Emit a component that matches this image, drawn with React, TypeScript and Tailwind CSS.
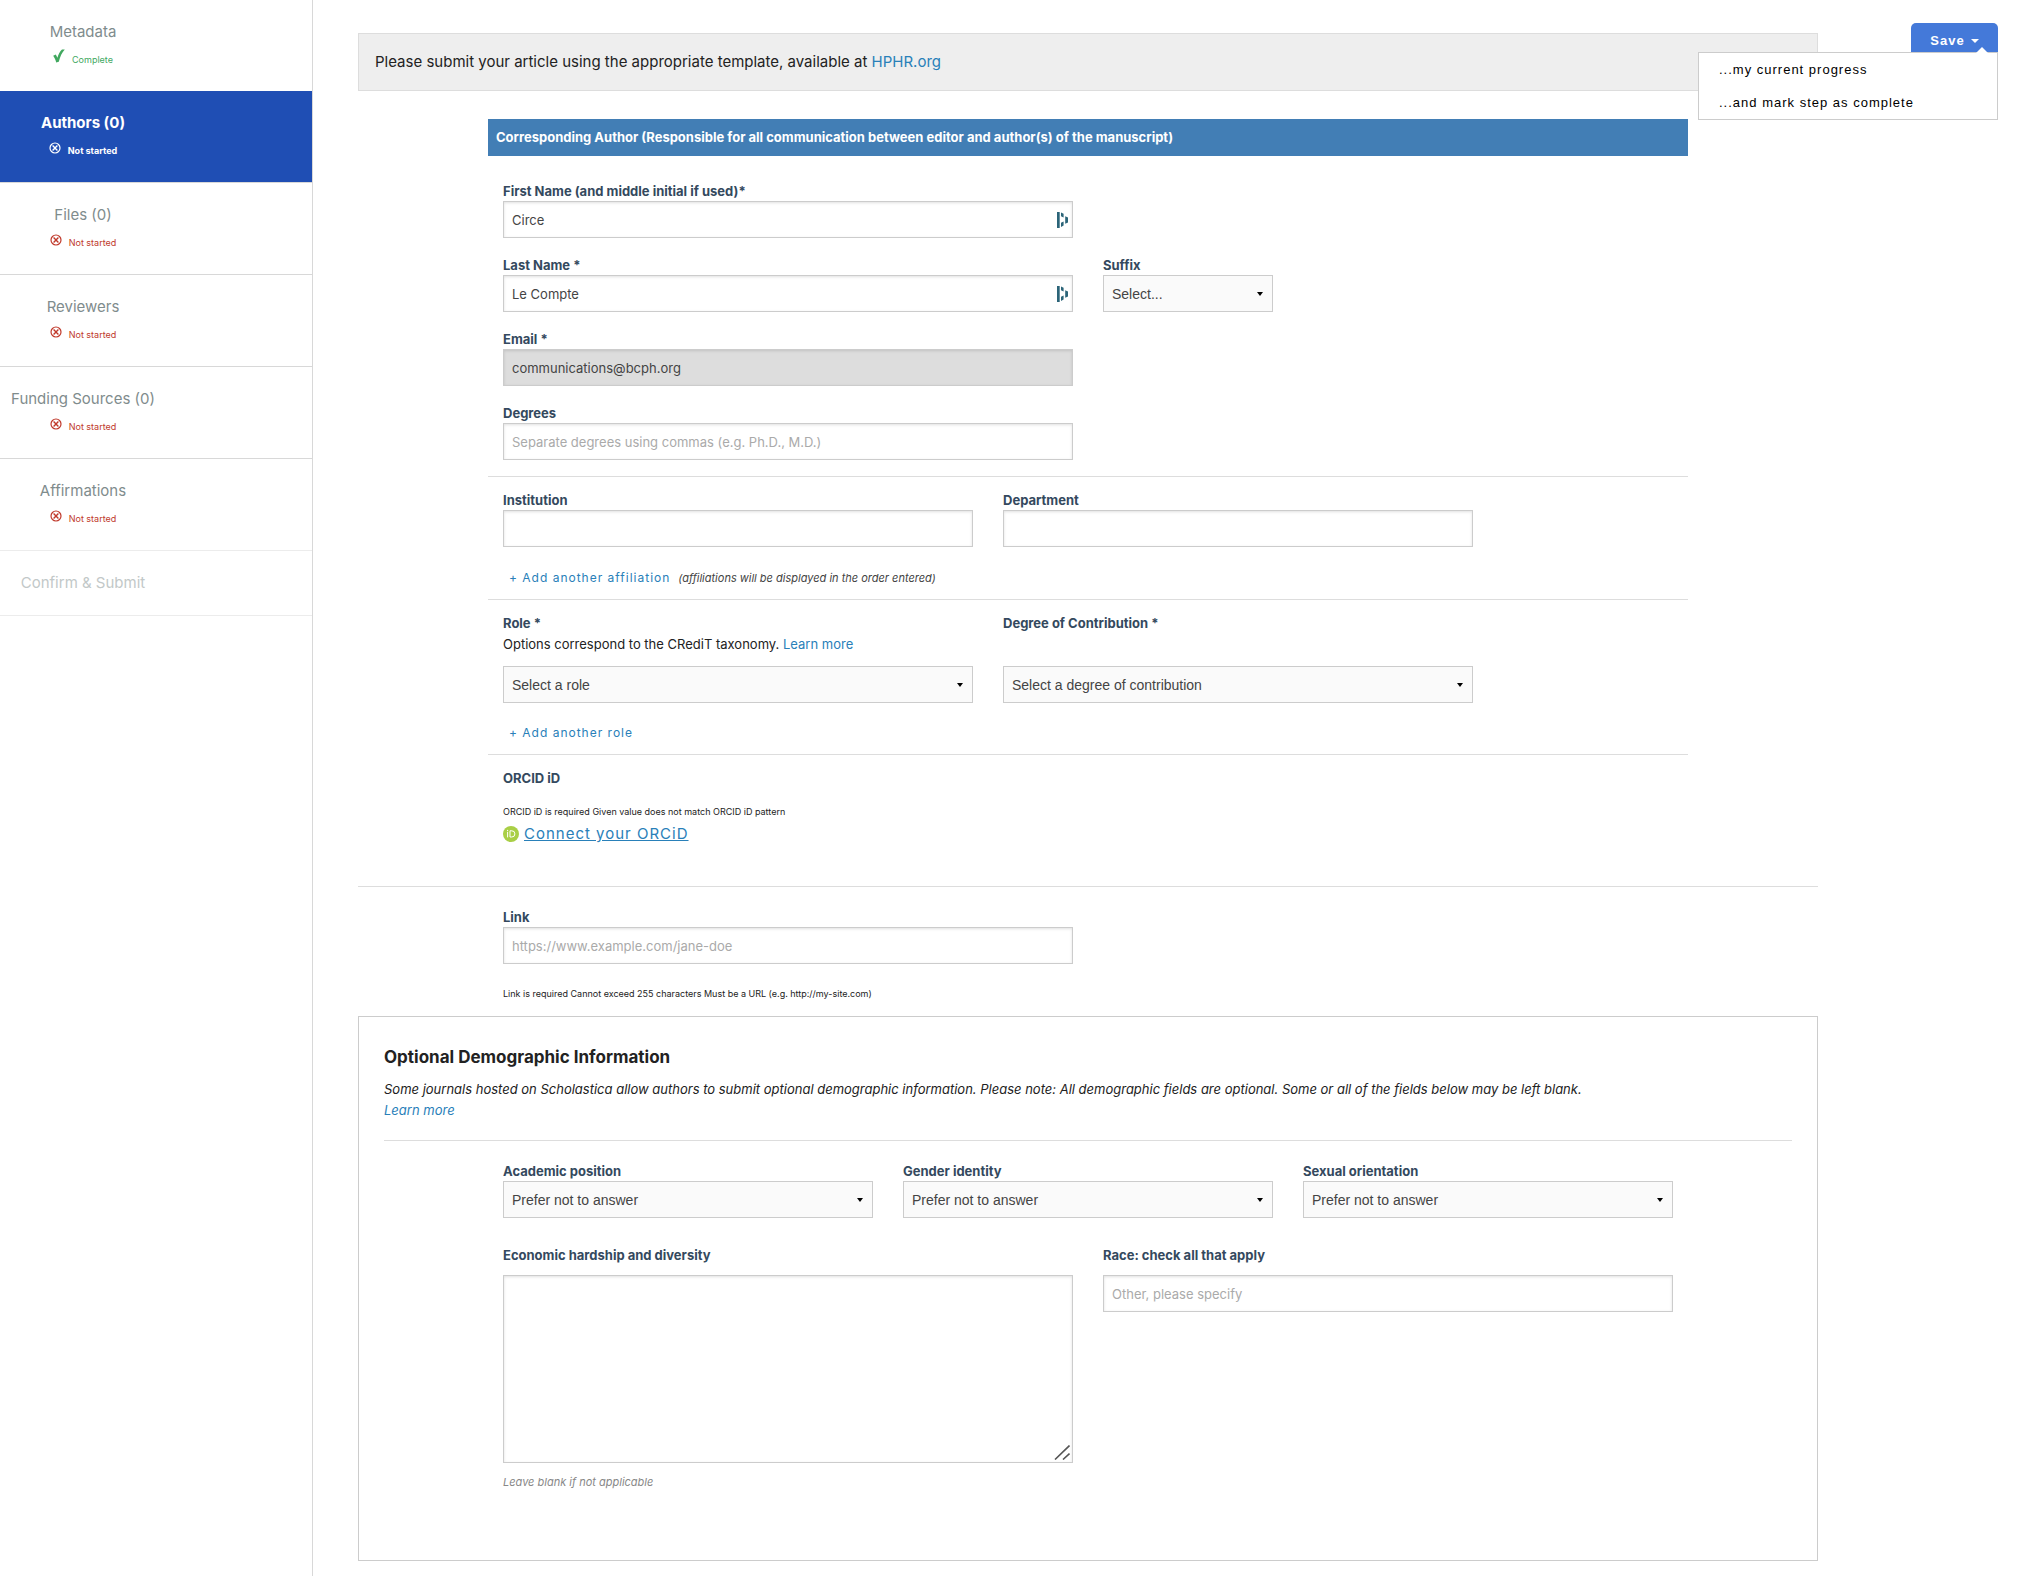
import { useState } from 'react';
import type { ReactNode } from 'react';

const steps = [
  { label: 'Metadata', status: 'complete', style: 'text-[#7f8c8d]' },
  { label: 'Authors (0)', status: 'active', style: 'bg-[#1f4eb4] text-white font-bold border-b border-[#d8d8d8]' },
  { label: 'Files (0)', status: 'todo', style: 'text-[#7f8c8d] border-b border-[#d8d8d8]' },
  { label: 'Reviewers', status: 'todo', style: 'text-[#7f8c8d] border-b border-[#d8d8d8]' },
  { label: 'Funding Sources (0)', status: 'todo', style: 'text-[#7f8c8d] border-b border-[#d8d8d8]' },
  { label: 'Affirmations', status: 'todo', style: 'text-[#7f8c8d] border-b border-[#ececec]' },
  { label: 'Confirm & Submit', status: 'none', style: 'text-[#c2c8c8] border-b border-[#ececec]' },
];

const fieldStyle =
  'block h-[37px] w-full rounded-none border border-[#ccc] px-2 text-[13px] text-[#444] placeholder-[#aaa] shadow-[inset_0_1px_3px_rgba(0,0,0,0.12)] outline-none';

const CheckIcon = () => (
  <svg width="12" height="14" viewBox="0 0 12 14" fill="currentColor" aria-hidden="true">
    <path d="M0.2 6.8 L2.8 5.6 L4.4 8.8 C5.4 5.4 7 2.2 9 0.6 L11.8 0.4 C9 3.4 7 7.6 5.8 12.8 L3.2 13.4 C2.6 10.8 1.4 8.6 0.2 6.8 Z" />
  </svg>
);

const CrossIcon = () => (
  <svg width="12" height="12" viewBox="0 0 12 12" fill="none" stroke="currentColor" aria-hidden="true">
    <circle cx="6" cy="6" r="5" strokeWidth="1.2" />
    <path d="M3.6 3.6 L8.4 8.4 M8.4 3.6 L3.6 8.4" strokeWidth="1.4" />
  </svg>
);

const PasswordIcon = () => (
  <svg className="absolute top-[11px] right-[5px]" width="11" height="16" viewBox="0 0 11 16" fill="#2b6478" aria-hidden="true">
    <rect x="0" y="0" width="2.7" height="16" />
    <path d="M4 0.5 L6.6 1.7 V5.5 L4 4.3 Z M4 10.7 L6.6 9.5 V13.6 L4 15 Z M8.2 4.2 L11 5.5 V10.5 L8.2 11.8 Z" />
  </svg>
);

const OrcidIcon = () => (
  <svg width="16" height="16" viewBox="0 0 16 16" aria-hidden="true">
    <circle cx="8" cy="8" r="8" fill="#a9cf46" />
    <path d="M4.6 5.8 V11.4 M7 4.8 H8.8 A3 3 0 0 1 8.8 11 H7 Z" fill="none" stroke="#fff" strokeWidth="1" />
    <circle cx="4.6" cy="4.4" r="0.6" fill="#fff" />
  </svg>
);

const Field = ({ id, label, className, children }: { id: string; label: string; className: string; children: ReactNode }) => (
  <div className={`px-[15px] ${className}`}>
    <label htmlFor={id} className="block text-[13px] leading-5 font-bold text-[#34495e]">
      {label}
    </label>
    {children}
  </div>
);

const Select = ({ id, option }: { id: string; option: string }) => (
  <div className="relative">
    <select
      id={id}
      className="block h-[37px] w-full appearance-none rounded-none border border-[#ccc] bg-[#fafafa] px-2 font-['Liberation_Sans',Arial,sans-serif] text-sm text-[#444] outline-none"
    >
      <option>{option}</option>
    </select>
    <svg className="pointer-events-none absolute top-[17px] right-[10px]" width="6" height="4" viewBox="0 0 6 4" aria-hidden="true">
      <path d="M0 0 H6 L3 4 Z" fill="#000" />
    </svg>
  </div>
);

const Sidebar = () => (
  <nav className="w-[313px] shrink-0 border-r border-[#d8d8d8]">
    {steps.map((step) => (
      <a key={step.label} href="#" className={`block py-5 ${step.style}`}>
        <div className="w-[166px] text-center">
          <div className="text-[15px] leading-6">{step.label}</div>
          {step.status === 'complete' && (
            <div className="mt-[5px] mb-[2px] flex h-5 items-start justify-center gap-[7px] text-[#41a85f]">
              <CheckIcon />
              <span className="text-[9px] leading-[22px]">Complete</span>
            </div>
          )}
          {step.status === 'active' && (
            <div className="mt-[7px] flex h-5 items-start justify-center gap-[7px]">
              <CrossIcon />
              <span className="text-[9px] leading-[18px]">Not started</span>
            </div>
          )}
          {step.status === 'todo' && (
            <div className="mt-[7px] flex h-5 items-start justify-center gap-[7px] text-[#c0392b]">
              <CrossIcon />
              <span className="text-[9px] leading-[18px]">Not started</span>
            </div>
          )}
        </div>
      </a>
    ))}
  </nav>
);

const SaveMenu = () => {
  const [open, setOpen] = useState(true);

  return (
    <div className="relative flex w-[180px] shrink-0 items-start justify-end pt-[23px] font-['Liberation_Sans',Arial,sans-serif]">
      <button
        onClick={() => setOpen(!open)}
        className="flex h-9 w-[87px] items-center justify-center gap-[6px] rounded-[5px] bg-[#4479d9] text-[13px] font-bold tracking-[1px] text-white"
      >
        Save
        <svg width="8" height="4" viewBox="0 0 8 4" aria-hidden="true">
          <path d="M0 0 H8 L4 4 Z" fill="#fff" />
        </svg>
      </button>
      {open && (
        <div className="absolute top-[52px] right-0 w-[300px] border border-[#ccc] bg-white">
          <svg className="absolute -top-[6px] right-[9px]" width="12" height="6" viewBox="0 0 12 6" aria-hidden="true">
            <path d="M0 6 L6 0 L12 6 Z" fill="#fff" />
          </svg>
          <button className="block h-[33px] w-full px-5 text-left text-[13px] tracking-[1px] text-black">...my current progress</button>
          <button className="block h-[33px] w-full px-5 text-left text-[13px] tracking-[1px] text-black">
            ...and mark step as complete
          </button>
        </div>
      )}
    </div>
  );
};

const AuthorForm = () => (
  <section className="mx-auto mt-7 max-w-[1200px]">
    <h2 className="bg-[#427eb5] px-2 text-[13px] leading-[37px] font-bold text-white">
      Corresponding Author (Responsible for all communication between editor and author(s) of the manuscript)
    </h2>

    <div className="grid grid-cols-12 gap-y-[17px] pt-[25px] pb-4">
      <Field id="first-name" label="First Name (and middle initial if used)*" className="col-span-6">
        <div className="relative">
          <input id="first-name" defaultValue="Circe" className={fieldStyle} />
          <PasswordIcon />
        </div>
      </Field>
      <Field id="last-name" label="Last Name *" className="col-span-6 col-start-1">
        <div className="relative">
          <input id="last-name" defaultValue="Le Compte" className={fieldStyle} />
          <PasswordIcon />
        </div>
      </Field>
      <Field id="suffix" label="Suffix" className="col-span-2">
        <Select id="suffix" option="Select..." />
      </Field>
      <Field id="email" label="Email *" className="col-span-6 col-start-1">
        <input id="email" type="email" readOnly defaultValue="communications@bcph.org" className={`${fieldStyle} bg-[#ddd]`} />
      </Field>
      <Field id="degrees" label="Degrees" className="col-span-6 col-start-1">
        <input id="degrees" placeholder="Separate degrees using commas (e.g. Ph.D., M.D.)" className={fieldStyle} />
      </Field>
    </div>

    <div className="border-t border-[#ddd] pt-[13px]">
      <div className="grid grid-cols-12">
        <Field id="institution" label="Institution" className="col-span-5">
          <input id="institution" className={fieldStyle} />
        </Field>
        <Field id="department" label="Department" className="col-span-5">
          <input id="department" className={fieldStyle} />
        </Field>
      </div>
      <div className="mt-[21px] mb-[11px] flex items-center gap-2 px-[21px] leading-5">
        <button className="text-xs leading-5 tracking-[1px] text-[#2980b9]">+ Add another affiliation</button>
        <em className="text-[11px] leading-5 text-[#444]">(affiliations will be displayed in the order entered)</em>
      </div>
    </div>

    <div className="border-t border-[#ddd] pt-[13px]">
      <div className="grid grid-cols-12">
        <Field id="role" label="Role *" className="col-span-5">
          <p className="mb-[11px] text-[13px] leading-[22px] text-[#222]">
            Options correspond to the CRediT taxonomy.{' '}
            <a href="#" className="text-[#2980b9]">
              Learn more
            </a>
          </p>
          <Select id="role" option="Select a role" />
        </Field>
        <Field id="contribution" label="Degree of Contribution *" className="col-span-5 flex flex-col justify-between">
          <Select id="contribution" option="Select a degree of contribution" />
        </Field>
      </div>
      <div className="mt-5 mb-[11px] flex px-[21px]">
        <button className="text-xs leading-5 tracking-[1px] text-[#2980b9]">+ Add another role</button>
      </div>
    </div>

    <div className="border-t border-[#ddd] px-[15px] pt-[13px] pb-10">
      <h3 className="text-[13px] leading-5 font-bold text-[#34495e]">ORCID iD</h3>
      <p className="mt-[14px] text-[9px] leading-5 text-[#222]">ORCID iD is required Given value does not match ORCID iD pattern</p>
      <a href="#" className="flex items-center gap-[5px] text-[15px] leading-6 tracking-[1px] text-[#2980b9]">
        <OrcidIcon />
        <span className="underline">Connect your ORCiD</span>
      </a>
    </div>
  </section>
);

const LinkForm = () => (
  <section className="border-t border-[#ddd] pt-5 pb-3">
    <div className="mx-auto grid max-w-[1200px] grid-cols-12">
      <Field id="link" label="Link" className="col-span-6">
        <input id="link" type="url" placeholder="https://www.example.com/jane-doe" className={fieldStyle} />
        <p className="mt-5 text-[9px] leading-5 text-[#222]">
          Link is required Cannot exceed 255 characters Must be a URL (e.g. http://my-site.com)
        </p>
      </Field>
    </div>
  </section>
);

const Demographics = () => (
  <section className="border border-[#ccc] px-[25px] pt-7 pb-[68px]">
    <h2 className="text-[17px] leading-6 font-bold text-[#222]">Optional Demographic Information</h2>
    <p className="mt-[10px] text-[13px] leading-[21px] text-[#222] italic">
      Some journals hosted on Scholastica allow authors to submit optional demographic information. Please note: All demographic
      fields are optional. Some or all of the fields below may be left blank.
      <br />
      <a href="#" className="text-[#2980b9]">
        Learn more
      </a>
    </p>
    <div className="mt-[19px] border-t border-[#ddd] pt-5">
      <div className="mx-auto grid max-w-[1200px] grid-cols-12 gap-y-[27px]">
        <Field id="position" label="Academic position" className="col-span-4">
          <Select id="position" option="Prefer not to answer" />
        </Field>
        <Field id="gender" label="Gender identity" className="col-span-4">
          <Select id="gender" option="Prefer not to answer" />
        </Field>
        <Field id="orientation" label="Sexual orientation" className="col-span-4">
          <Select id="orientation" option="Prefer not to answer" />
        </Field>
        <Field id="hardship" label="Economic hardship and diversity" className="col-span-6">
          <div className="relative mt-[10px]">
            <textarea
              id="hardship"
              className="block h-[188px] w-full resize-none border border-[#ccc] p-2 text-[13px] shadow-[inset_0_1px_3px_rgba(0,0,0,0.12)] outline-none"
            />
            <svg className="pointer-events-none absolute right-[3px] bottom-[3px]" width="16" height="15" viewBox="0 0 16 15" aria-hidden="true">
              <path d="M1 14.5 L15.5 0.5 M9 14.5 L15.5 8.5" stroke="#555" strokeWidth="1.6" />
            </svg>
          </div>
          <p className="mt-[9px] text-[11px] leading-5 text-[#888] italic">Leave blank if not applicable</p>
        </Field>
        <Field id="race" label="Race: check all that apply" className="col-span-6">
          <input id="race" placeholder="Other, please specify" className={`mt-[10px] ${fieldStyle}`} />
        </Field>
      </div>
    </div>
  </section>
);

export default function App() {
  return (
    <div className="flex min-h-screen bg-white font-['Inter',sans-serif]">
      <Sidebar />
      <main className="flex min-w-0 flex-1 pr-[38px] pb-[15px] pl-[45px]">
        <div className="min-w-0 flex-1 pt-[33px]">
          <p className="border border-[#ddd] bg-[#eee] px-4 text-[15px] leading-[56px] text-[#222]">
            Please submit your article using the appropriate template, available at{' '}
            <a href="#" className="text-[#2980b9]">
              HPHR.org
            </a>
          </p>
          <AuthorForm />
          <LinkForm />
          <Demographics />
        </div>
        <SaveMenu />
      </main>
    </div>
  );
}
